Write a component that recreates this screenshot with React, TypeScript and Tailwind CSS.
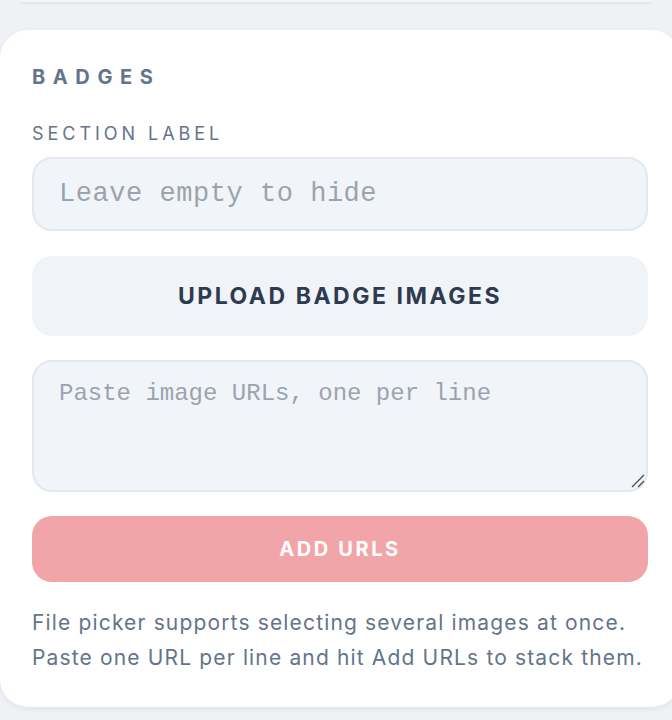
export default function App() {
  return (
    <div className="min-h-screen w-full overflow-hidden bg-[#eff1f5] font-['Inter',sans-serif]">
      <div className="mx-5 h-[2px] rounded-b-md bg-[#f4f5f8] shadow-sm" />
      <div className="mt-[28px] w-[680px] rounded-[28px] bg-white px-8 pt-[33px] pb-[32px] shadow-[0_2px_6px_rgba(15,23,42,0.06)]">
        <h2 className="text-[20px] leading-7 font-bold tracking-[0.38em] text-[#64748b]">
          BADGES
        </h2>
        <label className="mt-[31px] block text-[18px] leading-6 tracking-[0.22em] text-[#64748b]">
          SECTION LABEL
        </label>
        <input
          type="text"
          placeholder="Leave empty to hide"
          className="mt-[11px] block h-[74px] w-full rounded-[20px] border-2 border-[#e2e8f0] bg-[#f1f5f9] pl-[25px] font-['Liberation_Mono',monospace] text-[27px] tracking-[0.02em] text-slate-700 placeholder:text-[#9ca3af] outline-none"
        />
        <div className="mt-[25px] flex flex-col gap-6">
          <button
            type="button"
            className="h-[80px] w-full rounded-[20px] bg-[#f0f4f9] text-[23px] font-bold tracking-[0.11em] text-[#2d3a4f]"
          >
            UPLOAD BADGE IMAGES
          </button>
          <div className="relative">
            <textarea
              placeholder="Paste image URLs, one per line"
              className="block h-[132px] w-full resize-none rounded-[20px] border-2 border-[#e2e8f0] bg-[#f1f5f9] px-[25px] pt-[14px] font-['Liberation_Mono',monospace] text-[24px] text-slate-700 placeholder:text-[#9ca3af] outline-none"
            />
            <svg
              className="pointer-events-none absolute right-[3px] bottom-[4px]"
              width="14"
              height="14"
              viewBox="0 0 14 14"
            >
              <path d="M1 13 L13 1" stroke="#4b4b4b" strokeWidth="1.3" />
              <path d="M7 13 L13 7" stroke="#4b4b4b" strokeWidth="1.3" />
            </svg>
          </div>
          <button
            type="button"
            className="h-[66px] w-full rounded-[20px] bg-[#f2a5a8] text-[20px] font-bold tracking-[0.13em] text-white"
          >
            ADD URLS
          </button>
        </div>
        <p className="mt-[23px] text-[21px] leading-[35px] tracking-[0.055em] text-[#64748b]">
          File picker supports selecting several images at once.
          <br />
          Paste one URL per line and hit Add URLs to stack them.
        </p>
      </div>
    </div>
  );
}
